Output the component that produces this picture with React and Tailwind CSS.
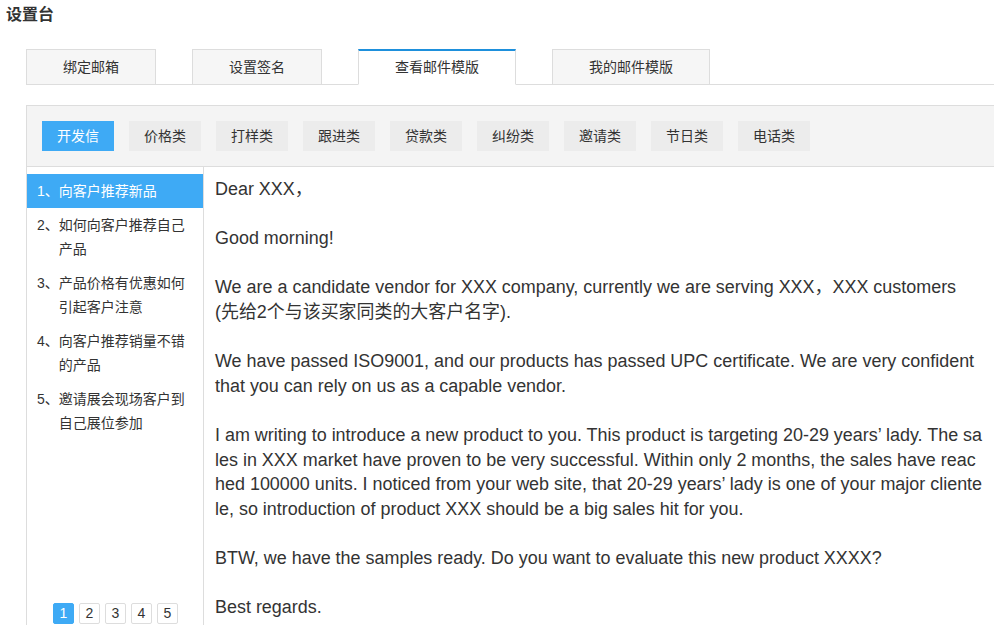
import React from "react";

const tabs = [
  { label: "绑定邮箱", width: "w-[130px]" },
  { label: "设置签名", width: "w-[130px]" },
  { label: "查看邮件模版", width: "w-[158px]", active: true },
  { label: "我的邮件模版", width: "w-[158px]" },
];

const categories = ["开发信", "价格类", "打样类", "跟进类", "贷款类", "纠纷类", "邀请类", "节日类", "电话类"];

const templates = [
  "向客户推荐新品",
  "如何向客户推荐自己产品",
  "产品价格有优惠如何引起客户注意",
  "向客户推荐销量不错的产品",
  "邀请展会现场客户到自己展位参加",
];

export default function App() {
  return (
    <div className="w-[994px] overflow-hidden bg-white text-[#333] font-['Liberation_Sans','Noto_Sans_CJK_SC',sans-serif]">
      {/* TITLE */}
      <div className="h-[30px] pl-[6px] text-[16px] font-bold leading-[30px]">设置台</div>

      {/* TABS */}
      <div className="mt-[19px] ml-[26px] flex border-b border-[#dddddd]">
        {tabs.map((tab, i) => (
          <div
            key={tab.label}
            className={`${tab.width} ${i > 0 ? "ml-[36px]" : ""} -mb-px flex h-[36px] items-center justify-center text-[14px] ${
              tab.active
                ? "border-x border-t-2 border-b border-[#dddddd] border-t-[#1e90dc] border-b-white bg-white"
                : "border border-[#dddddd] bg-[#f6f6f6]"
            }`}
          >
            {tab.label}
          </div>
        ))}
      </div>

      {/* PANEL */}
      <div className="mt-[20px] ml-[26px] w-[980px] border border-[#dddddd]">
        <div className="flex gap-[15px] border-b border-[#dddddd] bg-[#f4f4f4] px-[15px] py-[15px]">
          {categories.map((c, i) => (
            <div
              key={c}
              className={`flex h-[30px] w-[72px] items-center justify-center text-[14px] ${
                i === 0 ? "bg-[#3eaaf5] text-white" : "bg-[#ececec]"
              }`}
            >
              {c}
            </div>
          ))}
        </div>

        <div className="flex">
          {/* SIDEBAR */}
          <div className="flex w-[177px] shrink-0 flex-col border-r border-[#dddddd] pt-[7px]">
            {templates.map((t, i) => (
              <div
                key={t}
                className={`flex py-[5px] pl-[10px] pr-[10px] text-[14px] leading-[24px] ${
                  i === 0 ? "bg-[#3eaaf5] text-white" : ""
                }`}
              >
                <span className="shrink-0">{i + 1}、</span>
                <span>{t}</span>
              </div>
            ))}

            <div className="mt-auto mb-[10px] flex justify-center gap-[5px] pl-[1px]">
              {[1, 2, 3, 4, 5].map((n) => (
                <div
                  key={n}
                  className={`flex h-[21px] w-[21px] items-center justify-center rounded-[2px] border text-[14px] ${
                    n === 1 ? "border-[#3eaaf5] bg-[#3eaaf5] text-white" : "border-[#dddddd]"
                  }`}
                >
                  {n}
                </div>
              ))}
            </div>
          </div>

          {/* CONTENT */}
          <div className="flex-1 break-all pt-[10px] pb-[14px] pl-[11px] pr-[21px] text-[17.95px] leading-[24.6px]">
            <p className="mb-[24.6px]">Dear XXX，</p>
            <p className="mb-[24.6px]">Good morning!</p>
            <p className="mb-[24.6px]">
              We are a candidate vendor for XXX company, currently we are serving XXX，XXX customers
              <br />
              (先给2个与该买家同类的大客户名字).
            </p>
            <p className="mb-[24.6px]">
              We have passed ISO9001, and our products has passed UPC certificate. We are very confident that you can rely on us as a capable vendor.
            </p>
            <p className="mb-[24.6px]">
              I am writing to introduce a new product to you. This product is targeting 20-29 years’ lady. The sales in XXX market have proven to be very successful. Within only 2 months, the sales have reached 100000 units. I noticed from your web site, that 20-29 years’ lady is one of your major clientele, so introduction of product XXX should be a big sales hit for you.
            </p>
            <p className="mb-[24.6px]">BTW, we have the samples ready. Do you want to evaluate this new product XXXX?</p>
            <p>Best regards.</p>
          </div>
        </div>
      </div>
    </div>
  );
}
